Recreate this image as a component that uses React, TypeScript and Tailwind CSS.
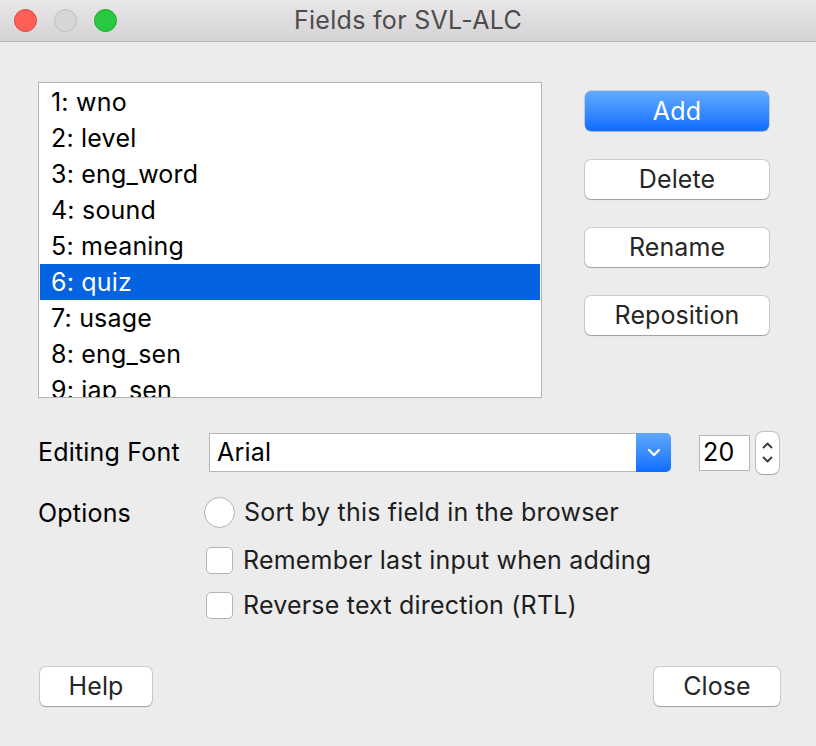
import React from "react";

const fields = [
  "1: wno",
  "2: level",
  "3: eng_word",
  "4: sound",
  "5: meaning",
  "6: quiz",
  "7: usage",
  "8: eng_sen",
  "9: jap_sen",
];

const font = { fontFamily: "Inter, 'Noto Sans', sans-serif" };

function PushButton({ label, className = "" }: { label: string; className?: string }) {
  return (
    <button
      className={`flex h-[39px] items-center justify-center rounded-[6px] bg-white text-[25px] leading-none tracking-[0.1px] text-[#262626] shadow-[0_0_0_1px_rgba(0,0,0,0.13),0_1px_1px_rgba(0,0,0,0.22)] ${className}`}
    >
      {label}
    </button>
  );
}

export default function App() {
  const selected = 5;

  return (
    <div
      className="flex h-[746px] w-[816px] flex-col overflow-hidden bg-[#ececec] text-black tracking-[0.2px]"
      style={font}
    >
      {/* Title bar */}
      <div className="grid h-[42px] shrink-0 grid-cols-[1fr_auto_1fr] items-center border-b border-[#b3b3b3] bg-linear-to-b from-[#e9e7e9] to-[#d4d2d4]">
        <div className="flex items-center gap-[17px] pl-[14px]">
          <span className="h-[23px] w-[23px] rounded-full border border-[#e0443e] bg-[#fe5f57]" />
          <span className="h-[23px] w-[23px] rounded-full border border-[#bdbdbd] bg-[#d6d6d6]" />
          <span className="h-[23px] w-[23px] rounded-full border border-[#1aab29] bg-[#28c840]" />
        </div>
        <div className="text-[25px] leading-none tracking-[0.3px] text-[#4c4c4c]">Fields for SVL-ALC</div>
        <div />
      </div>

      {/* Body */}
      <div className="flex flex-1 flex-col pl-[38px] pr-[36px] pt-[40px] pb-[40px]">
        <div className="flex">
          <div className="h-[316px] w-[504px] overflow-hidden border border-[#b4b4b4] bg-white pt-[1px]">
            {fields.map((f, i) => (
              <div
                key={f}
                className={`mx-[1px] h-[36px] pl-[11px] text-[25px] leading-[36px] ${
                  i === selected ? "bg-[#0363e1] text-white" : "text-black"
                }`}
              >
                {f}
              </div>
            ))}
          </div>

          <div className="ml-[43px] flex w-[184px] flex-col gap-[29px] pt-[9px]">
            <button className="flex h-[40px] items-center justify-center rounded-[6px] bg-linear-to-b from-[#62aafc] to-[#0a6cff] text-[25px] leading-none text-white shadow-[0_0_0_0.5px_rgba(0,60,200,0.35),0_1px_1px_rgba(0,0,0,0.15)]">
              Add
            </button>
            <PushButton label="Delete" />
            <PushButton label="Rename" />
            <PushButton label="Reposition" />
          </div>
        </div>

        {/* Editing font */}
        <div className="mt-[33px] flex h-[43px] items-center">
          <div className="w-[171px] text-[25px] leading-none">Editing Font</div>
          <div className="flex h-[39px] w-[462px]">
            <div className="flex flex-1 items-center border border-r-0 border-[#b6b6b6] bg-white pl-[7px] text-[25px] leading-none">
              Arial
            </div>
            <div className="flex w-[35px] items-center justify-center rounded-r-[5px] bg-linear-to-b from-[#5fa8fc] to-[#0a6cff]">
              <svg width="14" height="9" viewBox="0 0 14 9" fill="none">
                <path d="M2 2l5 5 5-5" stroke="white" strokeWidth="2.4" strokeLinecap="round" strokeLinejoin="round" />
              </svg>
            </div>
          </div>
          <div className="ml-[28px] flex h-[36px] w-[51px] items-center border border-[#b6b6b6] bg-white pl-[3px] text-[25px] leading-none">
            20
          </div>
          <div className="ml-[6px] flex h-[42px] w-[23px] flex-col items-center justify-center gap-[7px] rounded-[7px] bg-white shadow-[0_0_0_1px_rgba(0,0,0,0.18),0_1px_1px_rgba(0,0,0,0.15)]">
            <svg width="11" height="7" viewBox="0 0 11 7" fill="none">
              <path d="M1.5 5.5l4-4 4 4" stroke="#3a3a3a" strokeWidth="1.8" strokeLinecap="round" strokeLinejoin="round" />
            </svg>
            <svg width="11" height="7" viewBox="0 0 11 7" fill="none">
              <path d="M1.5 1.5l4 4 4-4" stroke="#3a3a3a" strokeWidth="1.8" strokeLinecap="round" strokeLinejoin="round" />
            </svg>
          </div>
        </div>

        {/* Options */}
        <div className="mt-[22px] flex">
          <div className="w-[166px] pt-[1px] text-[25px] leading-[32px]">Options</div>
          <div className="flex flex-col">
            <div className="flex h-[32px] items-center">
              <span className="h-[31px] w-[31px] rounded-full border border-[#b3b3b3] bg-white" />
              <span className="ml-[9px] text-[25px] leading-none text-[#1e1e1e]">Sort by this field in the browser</span>
            </div>
            <div className="mt-[16px] flex h-[32px] items-center pl-[2px]">
              <span className="h-[27px] w-[27px] rounded-[5px] border border-[#b3b3b3] bg-white" />
              <span className="ml-[10px] text-[25px] leading-none text-[#1e1e1e]">Remember last input when adding</span>
            </div>
            <div className="mt-[13px] flex h-[32px] items-center pl-[2px]">
              <span className="h-[27px] w-[27px] rounded-[5px] border border-[#b3b3b3] bg-white" />
              <span className="ml-[10px] text-[25px] leading-none text-[#1e1e1e]">Reverse text direction (RTL)</span>
            </div>
          </div>
        </div>

        {/* Footer */}
        <div className="mt-auto flex items-center justify-between pl-[2px]">
          <PushButton label="Help" className="w-[112px]" />
          <PushButton label="Close" className="w-[126px]" />
        </div>
      </div>
    </div>
  );
}
